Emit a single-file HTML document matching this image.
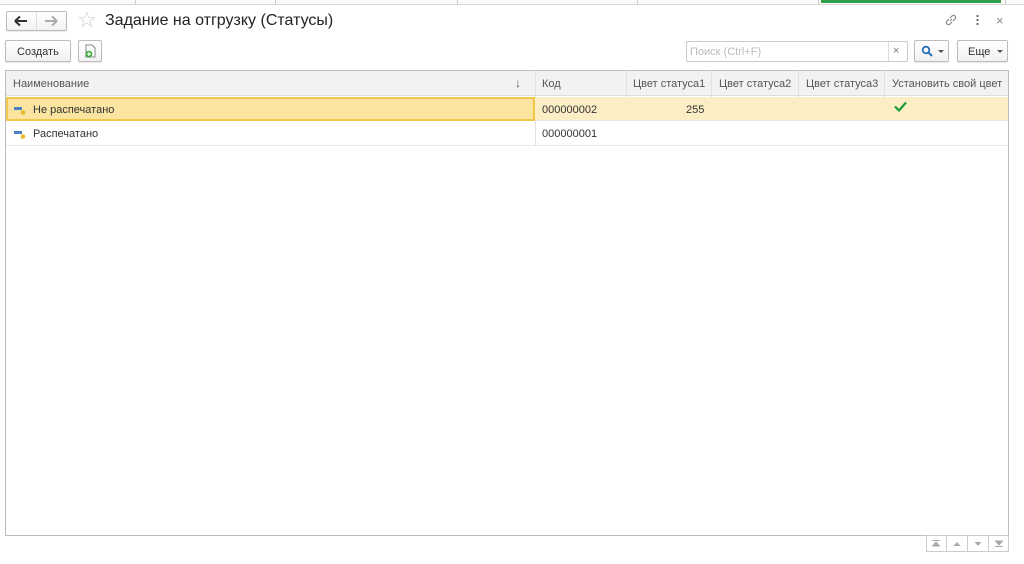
<!DOCTYPE html>
<html><head><meta charset="utf-8"><style>
*{box-sizing:border-box;margin:0;padding:0}
body{width:1024px;height:564px;background:#fff;font-family:"Liberation Sans",Arial,sans-serif;font-size:11px;color:#333;position:relative;overflow:hidden}
.a{position:absolute}
.btn{position:absolute;border:1px solid #bdbdbd;border-radius:2px;background:linear-gradient(#fff,#f1f1f1);box-shadow:0 1px 1px rgba(0,0,0,.1)}
.vl{position:absolute;top:70px;width:1px;background:#e0e0e0}
</style></head><body>
<div class="a" style="left:0;top:0;width:1024px;height:5px;border-bottom:1px solid #d8d8d8;background:#fafafa"></div>
<div class="a" style="left:135px;top:0;width:1px;height:5px;background:#ccc"></div>
<div class="a" style="left:275px;top:0;width:1px;height:5px;background:#ccc"></div>
<div class="a" style="left:457px;top:0;width:1px;height:5px;background:#ccc"></div>
<div class="a" style="left:637px;top:0;width:1px;height:5px;background:#ccc"></div>
<div class="a" style="left:818px;top:0;width:1px;height:5px;background:#ccc"></div>
<div class="a" style="left:821px;top:0;width:180px;height:3px;background:#2e9e4a"></div>
<div class="a" style="left:1005px;top:0;width:1px;height:5px;background:#ccc"></div>

<div class="btn" style="left:6px;top:11px;width:61px;height:20px"></div>
<div class="a" style="left:36px;top:12px;width:1px;height:18px;background:#ddd"></div>
<svg class="a" style="left:14px;top:15px" width="14" height="12"><path d="M1 6H13M1 6L6 1.5M1 6L6 10.5" stroke="#333" stroke-width="2" fill="none"/></svg>
<svg class="a" style="left:44px;top:15px" width="14" height="12"><path d="M1 6H13M13 6L8 1.5M13 6L8 10.5" stroke="#aaa" stroke-width="2" fill="none"/></svg>
<div class="a" style="left:77px;top:7px;font-size:22px;color:#ccc">&#9734;</div>
<div class="a" style="left:105px;top:12px;font-size:16px;color:#222">Задание на отгрузку (Статусы)</div>
<svg class="a" style="left:944px;top:13px" width="14" height="14" viewBox="0 0 14 14"><path d="M6 8 L8 6 M5 6 L3 8 a2 2 0 0 0 3 3 L8 9 M9 8 L11 6 a2 2 0 0 0 -3 -3 L6 5" stroke="#888" fill="none" stroke-width="1.2"/></svg>
<div class="a" style="left:976px;top:14px;width:3px;height:12px;background:radial-gradient(circle,#666 1px,transparent 1.3px) 0 0/3px 4px"></div>
<div class="a" style="left:996px;top:13px;font-size:13px;color:#888">×</div>

<div class="btn" style="left:5px;top:40px;width:66px;height:22px"></div>
<div class="a" style="left:17px;top:46px;color:#333">Создать</div>
<div class="btn" style="left:78px;top:40px;width:24px;height:22px"></div>
<svg class="a" style="left:84px;top:44px" width="13" height="14"><path d="M2 1h6l3 3v9H2z" fill="#fff" stroke="#888"/><circle cx="5" cy="10" r="3.3" fill="#3a3"/><path d="M5 8v4M3 10h4" stroke="#fff" stroke-width="1.2"/></svg>

<div class="a" style="left:686px;top:41px;width:222px;height:21px;border:1px solid #c8c8c8;border-radius:2px"></div>
<div class="a" style="left:888px;top:42px;width:1px;height:19px;background:#ddd"></div>
<div class="a" style="left:690px;top:46px;color:#bbb">Поиск (Ctrl+F)</div>
<div class="a" style="left:893px;top:45px;color:#777;font-size:11px">×</div>
<div class="btn" style="left:914px;top:40px;width:35px;height:22px"></div>
<svg class="a" style="left:921px;top:45px" width="12" height="12"><circle cx="5" cy="5" r="3.3" stroke="#2a6fba" stroke-width="1.8" fill="none"/><path d="M7.5 7.5L11 11" stroke="#2a6fba" stroke-width="2"/></svg>
<svg class="a" style="left:938px;top:50px" width="6" height="4"><path d="M0 0H6L3 3z" fill="#555"/></svg>
<div class="btn" style="left:957px;top:40px;width:51px;height:22px"></div>
<div class="a" style="left:968px;top:46px;color:#333">Еще</div>
<svg class="a" style="left:997px;top:50px" width="6" height="4"><path d="M0 0H6L3 3z" fill="#555"/></svg>

<div class="a" style="left:5px;top:70px;width:1004px;height:466px;border:1px solid #bdbdbd"></div>
<div class="a" style="left:6px;top:71px;width:1002px;height:25px;background:#f2f2f2;border-bottom:1px solid #ddd"></div>
<div class="vl" style="left:535px;height:76px"></div>
<div class="vl" style="left:626px;height:51px"></div>
<div class="vl" style="left:711px;height:51px"></div>
<div class="vl" style="left:798px;height:51px"></div>
<div class="vl" style="left:884px;height:51px"></div>
<div class="a" style="left:13px;top:78px;color:#555">Наименование</div>
<div class="a" style="left:515px;top:76px;color:#555;font-size:12px">↓</div>
<div class="a" style="left:542px;top:78px;color:#555">Код</div>
<div class="a" style="left:633px;top:78px;color:#555">Цвет статуса1</div>
<div class="a" style="left:719px;top:78px;color:#555">Цвет статуса2</div>
<div class="a" style="left:806px;top:78px;color:#555">Цвет статуса3</div>
<div class="a" style="left:892px;top:78px;color:#555">Установить свой цвет</div>

<div class="a" style="left:6px;top:97px;width:1002px;height:24px;background:#fbeec5;border-bottom:1px solid #e8e8e8"></div>
<div class="a" style="left:6px;top:97px;width:529px;height:24px;background:#fae4a0;border:2px solid #f0c94c"></div>
<div class="a" style="left:6px;top:121px;width:1002px;height:25px;border-bottom:1px solid #e8e8e8"></div>
<svg class="a" style="left:14px;top:104px" width="12" height="12"><rect x="0" y="3" width="8" height="3" fill="#4d7fc2"/><circle cx="9" cy="8.5" r="2.3" fill="#e9b62c"/></svg>
<svg class="a" style="left:14px;top:128px" width="12" height="12"><rect x="0" y="3" width="8" height="3" fill="#4d7fc2"/><circle cx="9" cy="8.5" r="2.3" fill="#e9b62c"/></svg>
<div class="a" style="left:33px;top:104px;color:#333">Не распечатано</div>
<div class="a" style="left:542px;top:104px;color:#333">000000002</div>
<div class="a" style="left:686px;top:104px;color:#333">255</div>
<svg class="a" style="left:894px;top:101px" width="13" height="11"><path d="M1 5.5L5 9.5L12 1.5" stroke="#1e9b3a" stroke-width="2.2" fill="none"/></svg>
<div class="a" style="left:33px;top:128px;color:#333">Распечатано</div>
<div class="a" style="left:542px;top:128px;color:#333">000000001</div>

<div class="a" style="left:926px;top:535px;width:83px;height:17px;border:1px solid #ccc"></div>
<div class="a" style="left:946px;top:535px;width:1px;height:17px;background:#ccc"></div>
<div class="a" style="left:967px;top:535px;width:1px;height:17px;background:#ccc"></div>
<div class="a" style="left:988px;top:535px;width:1px;height:17px;background:#ccc"></div>
<svg class="a" style="left:932px;top:540px" width="9" height="7"><path d="M0 0.5H8M0.5 6H7.5L4 2z" stroke="#aaa" fill="#aaa"/></svg>
<svg class="a" style="left:953px;top:541px" width="9" height="6"><path d="M0.5 5H7.5L4 1z" fill="#aaa"/></svg>
<svg class="a" style="left:974px;top:541px" width="9" height="6"><path d="M0.5 1H7.5L4 5z" fill="#aaa"/></svg>
<svg class="a" style="left:995px;top:540px" width="9" height="7"><path d="M0 6.5H8M0.5 1H7.5L4 5z" stroke="#aaa" fill="#aaa"/></svg>
</body></html>
